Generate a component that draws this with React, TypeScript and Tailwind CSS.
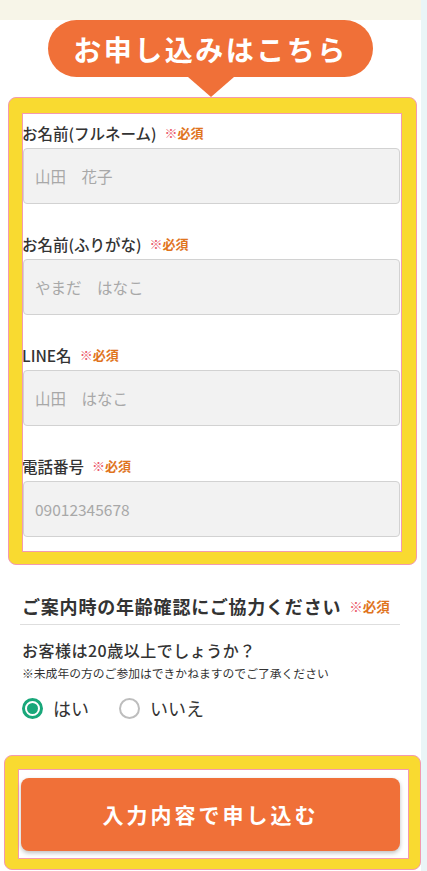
import React, { useState } from 'react';

const font = { fontFamily: '"Noto Sans CJK JP", "Noto Sans", sans-serif' };

const fields = [
  { label: 'お名前(フルネーム)', placeholder: '山田　花子' },
  { label: 'お名前(ふりがな)', placeholder: 'やまだ　はなこ' },
  { label: 'LINE名', placeholder: '山田　はなこ' },
  { label: '電話番号', placeholder: '09012345678' },
];

const Required: React.FC<{ size?: string }> = ({ size = 'text-[13px]' }) => (
  <span className={`${size} font-bold ml-[8px]`}>
    <span className="text-[#ea5a6a]">※</span>
    <span className="text-[#e0741e]">必須</span>
  </span>
);

const Radio: React.FC<{ label: string; checked: boolean; onClick: () => void }> = ({ label, checked, onClick }) => (
  <button type="button" onClick={onClick} className="flex items-center gap-[10px] h-[24px]">
    {checked ? (
      <span className="w-[21px] h-[21px] rounded-full border-[3px] border-[#19a77a] flex items-center justify-center">
        <span className="w-[11px] h-[11px] rounded-full bg-[#19a77a]" />
      </span>
    ) : (
      <span className="w-[21px] h-[21px] rounded-full border-2 border-[#bdbdbd]" />
    )}
    <span className="text-[18px] text-[#333] leading-[24px]">{label}</span>
  </button>
);

export default function App() {
  const [adult, setAdult] = useState(true);

  return (
    <div className="flex w-full bg-white" style={font}>
      <main className="w-[421px] pb-[1px]">
        {/* Top band */}
        <div className="h-[20px] bg-[#f7f5e8]" />

        {/* Bubble heading */}
        <div className="flex flex-col items-center">
          <div className="w-[325px] h-[57px] rounded-full bg-[#f07038] flex items-center justify-center">
            <span className="text-white text-[28px] font-bold tracking-[2.5px] leading-none">お申し込みはこちら</span>
          </div>
          <div className="w-0 h-0 border-l-[23px] border-r-[23px] border-t-[20px] border-l-transparent border-r-transparent border-t-[#f07038]" />
        </div>

        {/* Form box */}
        <div className="ml-[8px] w-[409px] rounded-[8px] bg-[#f9da30] border border-[#f39ab0] pt-[15px] pb-[12px] pl-[13px] pr-[14px]">
          <div className="bg-white border border-[#f39ab0] pt-[9px] pb-[14px] pr-[1px] flex flex-col gap-[30px]">
            {fields.map((f) => (
              <div key={f.label}>
                <div className="h-[20px] mb-[5px] flex items-center">
                  <span className="text-[15.5px] font-medium text-[#333] leading-[20px] -ml-[1px]">{f.label}</span>
                  <Required />
                </div>
                <input
                  placeholder={f.placeholder}
                  className="w-full h-[56px] bg-[#f2f2f2] border border-[#d2d2d2] rounded-[4px] px-[11px] text-[15.5px] text-[#333] placeholder:text-[#a8a8a8] outline-none"
                />
              </div>
            ))}
          </div>
        </div>

        {/* Age confirmation */}
        <div className="pl-[22px] pr-[21px] mt-[29px]">
          <div className="flex items-center pb-[6px] border-b border-[#dedede] -ml-[2px] pl-[2px]">
            <span className="text-[18px] font-bold text-[#333] tracking-[0.8px] leading-[24px]">ご案内時の年齢確認にご協力ください</span>
            <Required size="text-[13.5px]" />
          </div>
          <p className="mt-[14px] text-[16px] font-medium text-[#333] tracking-[0.5px] leading-[22px]">お客様は20歳以上でしょうか？</p>
          <p className="mt-[4px] text-[11.8px] text-[#333] leading-[16px]">※未成年の方のご参加はできかねますのでご了承ください</p>
          <div className="mt-[15px] flex items-center gap-[30px]">
            <Radio label="はい" checked={adult} onClick={() => setAdult(true)} />
            <Radio label="いいえ" checked={!adult} onClick={() => setAdult(false)} />
          </div>
        </div>

        {/* Submit box */}
        <div className="mt-[35px] ml-[4px] w-[417px] rounded-[8px] bg-[#f9da30] border border-[#f39ab0] pt-[13px] pb-[10px] pl-[13px] pr-[11px]">
          <div className="bg-white border border-[#f39ab0] pt-[8px] pb-[7px] pl-[2px] pr-[8px]">
            <button
              type="button"
              className="w-full h-[73px] rounded-[8px] bg-[#f07038] shadow-[0_2px_4px_rgba(0,0,0,0.25)] text-white text-[21px] font-bold tracking-[3px]"
            >
              入力内容で申し込む
            </button>
          </div>
        </div>
      </main>
      <aside className="flex-1 bg-[#eaf5f7]" />
    </div>
  );
}
